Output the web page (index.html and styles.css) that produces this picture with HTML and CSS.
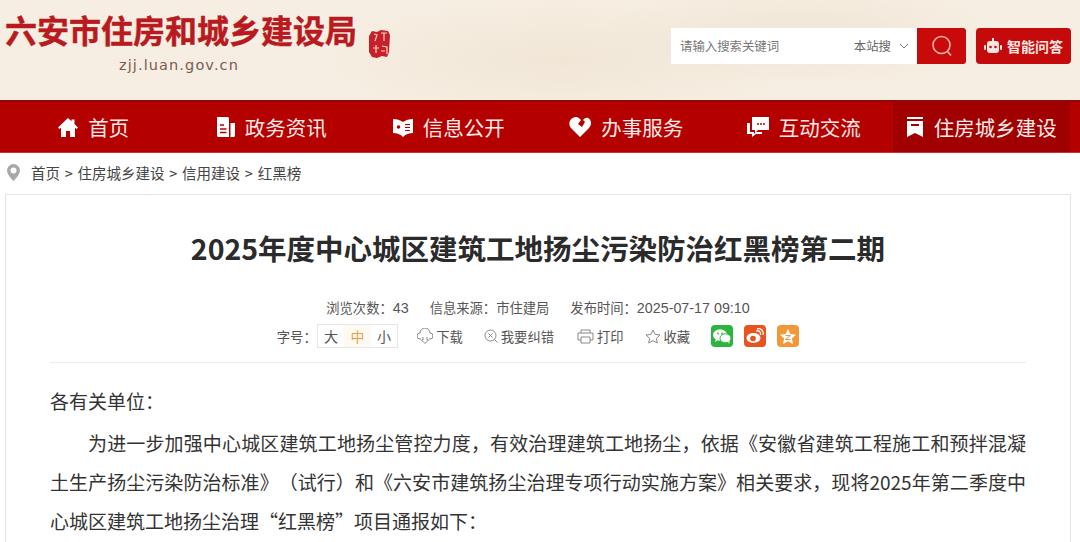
FILE: index.html
```html
<!DOCTYPE html>
<html lang="zh-CN">
<head>
    <meta charset="UTF-8">
    <meta name="viewport" content="width=device-width, initial-scale=1.0">
    <title>2025年度中心城区建筑工地扬尘污染防治红黑榜第二期</title>
    <link rel="stylesheet" href="styles.css">
</head>
<body>
    <header class="header">
        <div class="logo">
            <div class="logo-text">
                <div class="logo-name">六安市住房和城乡建设局</div>
                <div class="logo-url">zjj.luan.gov.cn</div>
            </div>
            <svg class="seal" width="22" height="28" viewBox="0 0 22 28">
                <path d="M3 1l5 1 4-2 7 1 2 4-1 17-2 5-5-1-5 2-5-1-3-5L0 6z" fill="#c8202a"/>
                <path d="M5 4l3 1-2 6M12 3h6M15 3v8M4 18h6M7 15v8M13 16l5 1v7M12 21h4" stroke="#f3d4c0" stroke-width="1.200" fill="none"/>
            </svg>
        </div>
        <div class="tools">
            <div class="search">
                <span class="search-hint">请输入搜索关键词</span>
                <span class="search-scope">本站搜</span>
                <svg class="search-arrow" width="10" height="6" viewBox="0 0 10 6"><path d="M1 1l4 4 4-4" fill="none" stroke="#777" stroke-width="1"/></svg>
            </div>
            <button class="search-btn">
                <svg width="22" height="24" viewBox="0 0 22 24"><circle cx="10.500" cy="11" r="8.500" fill="none" stroke="#f9b3a8" stroke-width="1.600"/><path d="M16.500 17.500l3.500 4" stroke="#f9b3a8" stroke-width="1.600"/></svg>
            </button>
            <button class="ai-btn">
                <svg width="18" height="16" viewBox="0 0 18 16">
                    <rect x="3" y="3" width="12" height="12" rx="3" fill="#fbe6e0"/>
                    <rect x="0" y="7" width="2" height="5" rx="1" fill="#fbe6e0"/>
                    <rect x="16" y="7" width="2" height="5" rx="1" fill="#fbe6e0"/>
                    <rect x="8" y="0" width="2" height="3" fill="#fbe6e0"/>
                    <circle cx="6.500" cy="9" r="1.300" fill="#c40a0a"/>
                    <circle cx="11.500" cy="9" r="1.300" fill="#c40a0a"/>
                </svg>
                <span>智能问答</span>
            </button>
        </div>
    </header>

    <nav class="nav">
        <a class="nav-item">
            <svg width="20" height="19" viewBox="0 0 20 19"><path d="M10 0L0 9.500l1.500 1.500L3 9.800V19h5v-6h4v6h5V9.800l1.500 1.200L20 9.500 16.500 6V1.500h-3V3.200z" fill="#fff"/></svg>
            <span>首页</span>
        </a>
        <a class="nav-item">
            <svg width="19" height="20" viewBox="0 0 19 20"><path d="M1 0h11l1 1v19H2l-1-1zM14.500 6H19v13l-1 1h-3.500z" fill="#fff"/><path d="M4 8h4M4 12h6.500M4 15.500h6.500" stroke="#b50000" stroke-width="1.600"/></svg>
            <span>政务资讯</span>
        </a>
        <a class="nav-item">
            <svg width="20" height="19" viewBox="0 0 20 19"><path d="M0 1c4 0 7 1 10 3 3-2 6-3 10-3v14c-4 0-7 1-10 4-3-3-6-4-10-4z" fill="#fff"/><circle cx="5.500" cy="9" r="1.800" fill="#b50000"/><path d="M12 6.500h5M12 9.500h5M12 12.500h5" stroke="#b50000" stroke-width="1.200"/></svg>
            <span>信息公开</span>
        </a>
        <a class="nav-item">
            <svg width="22" height="20" viewBox="0 0 22 20"><path d="M11 20L2 11C-2 6 2 0 7 0c2 0 3 1 5 3L9 7l4 3 3-5-2-2c4-5 8-1 8 3 0 2-1 4-2 5z" fill="#fff"/></svg>
            <span>办事服务</span>
        </a>
        <a class="nav-item">
            <svg width="22" height="20" viewBox="0 0 22 20"><path d="M5 0h17v13H11l-3 3v-3H5z" fill="#fff"/><path d="M0 6h3v9h4v2l2-2h6v2H9l-4 3v-3H0z" fill="#fff"/><path d="M10 7h2M13 7h2M16 7h2" stroke="#b50000" stroke-width="1.600"/></svg>
            <span>互动交流</span>
        </a>
        <a class="nav-item is-active">
            <svg width="18" height="20" viewBox="0 0 18 20"><path d="M1 0h16v2H1zM1 4h16v16l-8-4-8 4z" fill="#fff"/><path d="M5 8h8" stroke="#a00000" stroke-width="2"/></svg>
            <span>住房城乡建设</span>
        </a>
    </nav>

    <div class="crumbs">
        <svg width="13" height="17" viewBox="0 0 13 17"><path d="M6.500 0A6.500 6.500 0 0 0 0 6.500C0 11 6.500 17 6.500 17S13 11 13 6.500A6.500 6.500 0 0 0 6.500 0zm0 9.500a3 3 0 1 1 0-6 3 3 0 0 1 0 6z" fill="#a8a8a8"/></svg>
        <span>首页 &gt; 住房城乡建设 &gt; 信用建设 &gt; 红黑榜</span>
    </div>

    <main class="article">
        <h1 class="title">2025年度中心城区建筑工地扬尘污染防治红黑榜第二期</h1>
        <div class="meta">
            <span>浏览次数：<span class="num">43</span></span>
            <span>信息来源：市住建局</span>
            <span>发布时间：<span class="num">2025-07-17 09:10</span></span>
        </div>
        <div class="actions">
            <div class="font-size">
                <span>字号：</span>
                <div class="font-box"><span>大</span><span class="on">中</span><span>小</span></div>
            </div>
            <a class="action action-download">
                <svg width="16" height="16" viewBox="0 0 16 16"><path d="M4 11H3a3 3 0 0 1 0-6 5 5 0 0 1 10 0 3 3 0 0 1 0 6h-1M6 9v3H4.500L8 15.500l3.500-3.500H10V9" fill="none" stroke="#888"/></svg>
                下载
            </a>
            <a class="action">
                <svg width="14" height="14" viewBox="0 0 14 14"><circle cx="6.500" cy="6.500" r="5.500" fill="none" stroke="#888"/><path d="M4.500 4.500l4 4M8.500 4.500l-4 4M10.500 10.500l3 3" stroke="#888"/></svg>
                我要纠错
            </a>
            <a class="action action-print">
                <svg width="17" height="15" viewBox="0 0 17 15"><path d="M4 4V1h9v3M4 11H1V4h15v7h-3M4 8h9v6H4z" fill="none" stroke="#888"/></svg>
                打印
            </a>
            <a class="action">
                <svg width="16" height="15" viewBox="0 0 16 15"><path d="M8 1l2.100 4.400 4.900.6-3.600 3.300.9 4.700L8 11.700 3.700 14l.9-4.700L1 6l4.900-.6z" fill="none" stroke="#888"/></svg>
                收藏
            </a>
            <div class="shares">
                <span class="share wechat">
                    <svg width="18" height="15" viewBox="0 0 18 15"><ellipse cx="7" cy="6" rx="7" ry="5.700" fill="#fff"/><path d="M3 10l-1 3 3-2z" fill="#fff"/><ellipse cx="12.500" cy="9.300" rx="5.500" ry="4.500" fill="#fff" stroke="#2cb53b"/><path d="M15 13l1.500 2-.2-3z" fill="#fff"/><circle cx="5" cy="4.500" r=".9" fill="#2cb53b"/><circle cx="9" cy="4.500" r=".9" fill="#2cb53b"/></svg>
                </span>
                <span class="share weibo">
                    <svg width="18" height="16" viewBox="0 0 18 16"><ellipse cx="7.500" cy="10" rx="7" ry="5" fill="#fff"/><circle cx="7" cy="10.500" r="2.800" fill="#e8541e"/><path d="M10 3c3-1 5 1 4.500 4M11 .8c4-1 7 2 6 6" fill="none" stroke="#fff" stroke-width="1.300"/></svg>
                </span>
                <span class="share qzone">
                    <svg width="16" height="15" viewBox="0 0 16 15"><path d="M8 0l2.400 5 5.600.7-4.100 3.700 1.100 5.600L8 12.200 3 15l1.100-5.600L0 5.700 5.600 5z" fill="#fff"/><path d="M5.500 6.500h5l-5 4h5" fill="none" stroke="#f0983a" stroke-width="1"/></svg>
                </span>
            </div>
        </div>
        <div class="content">
            <p class="salute">各有关单位：</p>
            <p class="para">为进一步加强中心城区建筑工地扬尘管控力度，有效治理建筑工地扬尘，依据《安徽省建筑工程施工和预拌混凝土生产扬尘污染防治标准》（试行）和《六安市建筑扬尘治理专项行动实施方案》相关要求，现将2025年第二季度中心城区建筑工地扬尘治理“红黑榜”项目通报如下：</p>
        </div>
    </main>
</body>
</html>
```

FILE: styles.css
```css
* {
    box-sizing: border-box;
}
html, body {
    height: 542px;
    overflow: hidden;
}
body {
    margin: 0;
    background-color: #fff;
    color: #333;
    font-family: "Noto Sans CJK SC", "Liberation Sans", sans-serif;
}
.header {
    height: 100px;
    display: flex;
    justify-content: space-between;
    background:
        radial-gradient(ellipse 240px 60px at 560px 60px, #f1e6d6 0%, rgba(241, 230, 214, 0) 100%),
        radial-gradient(ellipse 200px 50px at 800px 35px, #f0e5d5 0%, rgba(240, 229, 213, 0) 100%),
        #f6eee2;
}
.logo {
    display: flex;
    padding: 10px 0 0 5px;
}
.logo-name {
    font-size: 32px;
    font-weight: 700;
    line-height: 38px;
    color: #b81a20;
    -webkit-text-stroke: 0.4px #b81a20;
}
.logo-url {
    margin: 8px 0 0 114px;
    font-family: "DejaVu Sans", sans-serif;
    font-size: 14.500px;
    letter-spacing: 1.100px;
    line-height: 18px;
    color: #7d5a50;
}
.seal {
    margin: 20px 0 0 12px;
}
.tools {
    display: flex;
    align-items: flex-start;
    padding: 28px 9px 0 0;
}
.search {
    width: 246px;
    height: 36px;
    display: flex;
    align-items: center;
    padding: 0 8px 1px 9px;
    background-color: #fff;
    font-size: 12.400px;
    color: #777;
}
.search-hint {
    flex: 1;
}
.search-scope {
    margin-right: 8px;
    color: #666;
}
.search-btn {
    width: 49px;
    height: 36px;
    border: 0;
    padding: 0;
    border-radius: 0 3px 3px 0;
    background-color: #c90a0a;
    display: flex;
    align-items: center;
    justify-content: center;
}
.ai-btn {
    width: 95px;
    height: 36px;
    margin-left: 10px;
    border: 0;
    padding: 0;
    border-radius: 4px;
    background-color: #c40a0a;
    display: flex;
    align-items: center;
    justify-content: center;
    gap: 5px;
    font-family: "Noto Sans CJK SC", sans-serif;
    font-size: 14px;
    font-weight: 700;
    color: #fbe6e0;
}
.nav {
    height: 53px;
    display: flex;
    padding: 0 10px 0 5px;
    background-color: #b50000;
    border-top: 2px solid #8c0a0a;
    border-bottom: 1px solid #c9302f;
}
.nav-item {
    flex: 1;
    display: flex;
    align-items: center;
    justify-content: center;
    gap: 10px;
    white-space: nowrap;
    font-size: 20.500px;
    color: #fbeaea;
}
.nav-item.is-active {
    background-color: #a00000;
}
.crumbs {
    height: 41px;
    display: flex;
    align-items: center;
    gap: 11px;
    padding: 0 0 2px 7px;
    font-size: 14.500px;
    word-spacing: 1.500px;
    color: #444;
}
.article {
    margin: 0 9px 0 5px;
    height: 348px;
    padding: 0 44px;
    overflow: hidden;
    border: 1px solid #e4e4e4;
    border-bottom: 0;
}
.title {
    margin: 33px 0 0;
    text-align: center;
    white-space: nowrap;
    font-size: 28.500px;
    font-weight: 700;
    line-height: 40px;
    color: #2b2b2b;
}
.meta {
    display: flex;
    justify-content: center;
    gap: 21px;
    margin-top: 30px;
    font-size: 13.300px;
    line-height: 20px;
    color: #555;
}
.num {
    font-family: "Liberation Sans", sans-serif;
    font-size: 14.300px;
}
.actions {
    height: 45px;
    display: flex;
    justify-content: center;
    align-items: center;
    gap: 21px;
    padding-bottom: 8px;
    border-bottom: 1px solid #eee;
    font-size: 13.300px;
    color: #555;
}
.font-size {
    display: flex;
    align-items: center;
}
.font-box {
    display: flex;
    border: 1px solid #e6e6e6;
}
.font-box span {
    width: 26.500px;
    height: 22px;
    line-height: 22px;
    text-align: center;
    font-size: 14px;
}
.font-box .on {
    color: #e6a23c;
    background-color: #fdfaf4;
}
.action {
    display: flex;
    align-items: center;
    gap: 3px;
}
.action-download {
    margin-left: -2px;
}
.action-print {
    margin-left: 2px;
}
.shares {
    display: flex;
    gap: 11px;
}
.share {
    width: 22px;
    height: 22px;
    border-radius: 4px;
    display: flex;
    align-items: center;
    justify-content: center;
}
.wechat {
    background-color: #2cb53b;
}
.weibo {
    background-color: #e8541e;
}
.qzone {
    background-color: #f0983a;
}
.content {
    font-size: 19px;
    line-height: 39px;
    color: #333;
    text-spacing-trim: space-all;
}
.salute {
    margin: 18px 0 3px;
}
.para {
    margin: 0;
    text-indent: 2em;
    text-align: justify;
}
```
